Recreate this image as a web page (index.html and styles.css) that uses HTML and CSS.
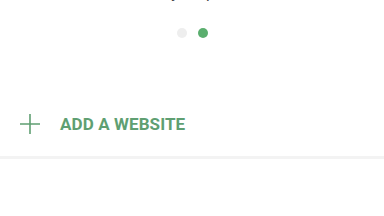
FILE: index.html
```html
<!DOCTYPE html>
<html>
<head>
<meta charset="utf-8">
<link rel="stylesheet" href="styles.css">
</head>
<body>
<div class="top">
  <p class="caption">Here's your preview</p>
  <div class="dots">
    <span class="dot"></span>
    <span class="dot active"></span>
  </div>
</div>
<div class="add-row">
  <svg class="plus" width="22" height="22" viewBox="0 0 22 22">
    <path d="M11 1V21M1 11H21" stroke="#5f9f72" stroke-width="1.6" fill="none"/>
  </svg>
  <span class="add-label">ADD A WEBSITE</span>
</div>
<div class="divider"></div>
</body>
</html>
```
FILE: styles.css
```css
html, body {
  margin: 0;
  padding: 0;
  background: #ffffff;
  width: 384px;
  height: 216px;
  overflow: hidden;
  font-family: Roboto, "Liberation Sans", sans-serif;
}
.top {
  display: flex;
  flex-direction: column;
  align-items: center;
}
.caption {
  margin: -17px 0 0 0;
  font-size: 16px;
  line-height: 20px;
  color: #444;
}
.dots {
  display: flex;
  gap: 11px;
  margin-top: 25px;
  align-items: center;
}
.dot {
  width: 10px;
  height: 10px;
  border-radius: 50%;
  background: #eeeeee;
}
.dot.active {
  background: #5aae6e;
}
.add-row {
  display: flex;
  align-items: center;
  height: 48px;
  margin-top: 62px;
  padding-left: 19px;
}
.plus {
  flex: none;
}
.add-label {
  margin-left: 19px;
  font-size: 17px;
  font-weight: 700;
  color: #5f9f72;
  letter-spacing: 0.1px;
}
.divider {
  height: 3px;
  margin-top: 8px;
  background: #f3f3f3;
}
```
